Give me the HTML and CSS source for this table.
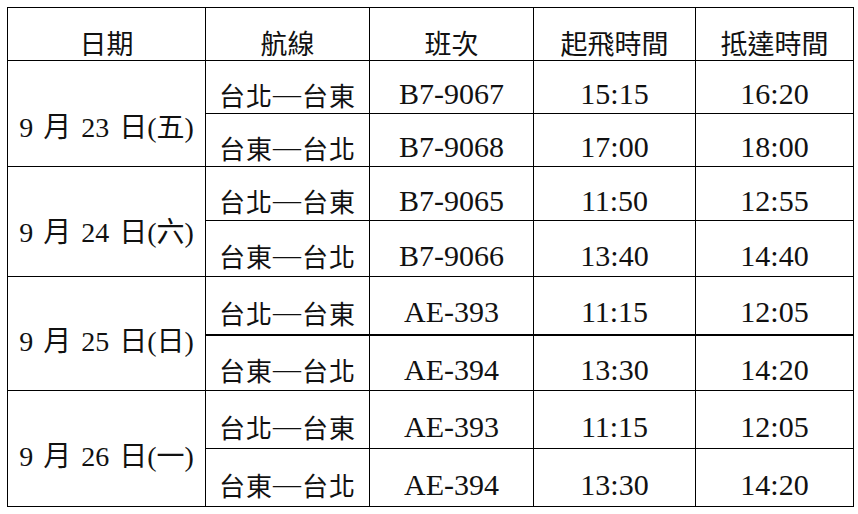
FILE: index.html
```html
<!DOCTYPE html>
<html lang="zh-Hant">
<head>
<meta charset="utf-8">
<title>航班時刻表</title>
<link rel="stylesheet" href="styles.css">
</head>
<body>
<table class="schedule">
  <colgroup>
    <col class="c-date"><col class="c-route"><col class="c-code"><col class="c-dep"><col class="c-arr">
  </colgroup>
  <thead>
    <tr class="r-head">
      <th>日期</th><th>航線</th><th>班次</th><th>起飛時間</th><th>抵達時間</th>
    </tr>
  </thead>
  <tbody>
    <tr class="r-a">
      <td class="date g1" rowspan="2">9 月 23 日(五)</td>
      <td class="route">台北<span class="dash">—</span>台東</td><td class="num">B7-9067</td><td class="num">15:15</td><td class="num">16:20</td>
    </tr>
    <tr class="r-b">
      <td class="route">台東<span class="dash">—</span>台北</td><td class="num">B7-9068</td><td class="num">17:00</td><td class="num">18:00</td>
    </tr>
    <tr class="r-c">
      <td class="date g2" rowspan="2">9 月 24 日(六)</td>
      <td class="route">台北<span class="dash">—</span>台東</td><td class="num">B7-9065</td><td class="num">11:50</td><td class="num">12:55</td>
    </tr>
    <tr class="r-d">
      <td class="route">台東<span class="dash">—</span>台北</td><td class="num">B7-9066</td><td class="num">13:40</td><td class="num">14:40</td>
    </tr>
    <tr class="r-e thick">
      <td class="date" rowspan="2">9 月 25 日(日)</td>
      <td class="route">台北<span class="dash">—</span>台東</td><td class="num">AE-393</td><td class="num">11:15</td><td class="num">12:05</td>
    </tr>
    <tr class="r-f">
      <td class="route">台東<span class="dash">—</span>台北</td><td class="num">AE-394</td><td class="num">13:30</td><td class="num">14:20</td>
    </tr>
    <tr class="r-g">
      <td class="date" rowspan="2">9 月 26 日(一)</td>
      <td class="route">台北<span class="dash">—</span>台東</td><td class="num">AE-393</td><td class="num">11:15</td><td class="num">12:05</td>
    </tr>
    <tr class="r-h">
      <td class="route">台東<span class="dash">—</span>台北</td><td class="num">AE-394</td><td class="num">13:30</td><td class="num">14:20</td>
    </tr>
  </tbody>
</table>
</body>
</html>
```
FILE: styles.css
```css
html, body {
  margin: 0;
  padding: 0;
  background: #fff;
}

body {
  padding: 7px 0 0 7px;
}

.schedule {
  border-collapse: collapse;
  table-layout: fixed;
  width: 846px;
  color: #111;
  font-family: "Liberation Serif", "Noto Sans CJK TC", serif;
}

.c-date { width: 198px; }
.c-route { width: 164px; }
.c-code { width: 164px; }
.c-dep { width: 162px; }
.c-arr { width: 158px; }

.schedule th,
.schedule td {
  border: 1px solid #000;
  padding: 14px 0 0 0;
  text-align: center;
  vertical-align: middle;
  line-height: 30px;
  white-space: nowrap;
}

.schedule th {
  font-weight: 400;
  font-size: 27px;
  padding-top: 18px;
  font-family: "Noto Sans CJK TC", serif;
}

.r-head { height: 53px; }
.r-a { height: 53px; }
.r-b { height: 53px; }
.r-c { height: 54px; }
.r-d { height: 56px; }
.r-e { height: 58px; }
.r-f { height: 56px; }
.r-g { height: 58px; }
.r-h { height: 58px; }

.route {
  font-family: "Noto Sans CJK TC", serif;
  font-size: 26px;
  letter-spacing: 1px;
}

.dash {
  font-family: "Liberation Serif", serif;
  font-size: 28px;
  letter-spacing: 1px;
  vertical-align: 3px;
}

.num {
  font-size: 30px;
}

.date {
  font-size: 28px;
  word-spacing: 3px;
  padding-top: 17px !important;
}

.date.g1 { padding-top: 28px !important; }
.date.g2 { padding-top: 23px !important; }

.thick td.route,
.thick td.num {
  border-bottom-width: 2px;
}
```
